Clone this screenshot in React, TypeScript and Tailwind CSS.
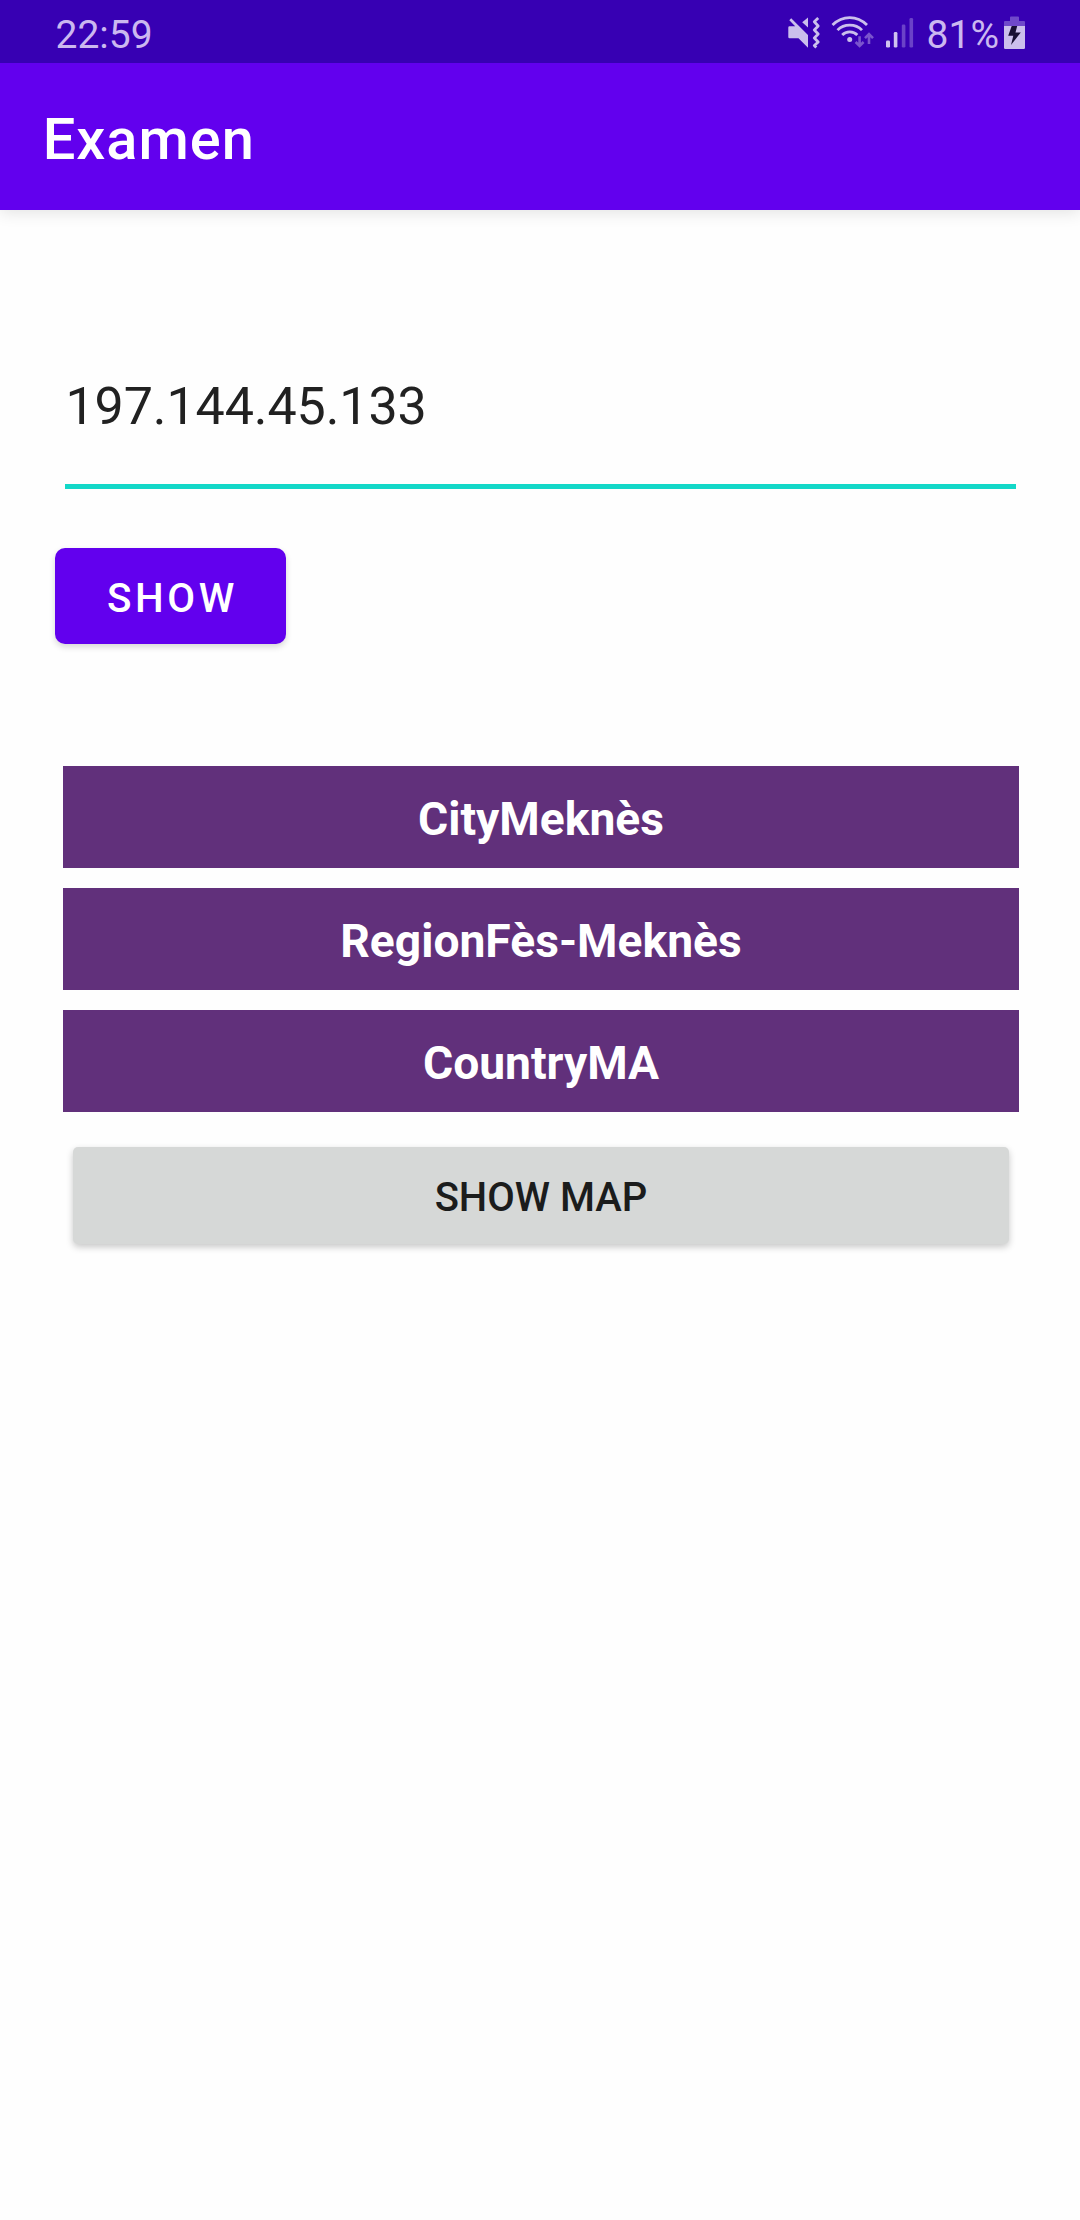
const results = ["CityMeknès", "RegionFès-Meknès", "CountryMA"];

function MutedIcon() {
  return (
    <svg className="h-[34px] w-[33px]" viewBox="0 0 33 34" fill="none">
      <path d="M1.5 10.3H7.2L1.3 4.2L3.2 2.2L20 19V31.7L10.5 22.3H1.5Q.3 22.3 .3 21V11.5Q.3 10.3 1.5 10.3Z" fill="#cbbfec" />
      <path d="M20 1.5V11.5L14.2 6.2Z" fill="#cbbfec" />
      <path d="M30.2 2L26.3 5.7L30.2 10L26.3 14L30.2 18L26.3 22L30.2 26L26.3 29.5L28.3 31.5" stroke="#cbbfec" strokeWidth="2.8" strokeLinejoin="round" />
    </svg>
  );
}

function WifiIcon() {
  return (
    <svg className="h-[34px] w-[44px]" viewBox="0 0 44 34" fill="none">
      <g stroke="#cbbfec" strokeWidth="2.8">
        <path d="M1.5 10C11.5 .1 26 .1 36 10" />
        <path d="M6.5 15.1C13 8.4 24.5 8.4 31 15.1" />
        <path d="M11.2 20C15 15.9 22.5 15.9 26.3 20" />
      </g>
      <circle cx="18.7" cy="24.5" r="2.5" fill="#cbbfec" />
      <g stroke="#7b55cd" strokeWidth="2.6">
        <path d="M28.6 21.2V31.5M24.6 27L28.6 31L32.6 27" />
        <path d="M38 29V19M34 23.2L38 19.2L42 23.2" />
      </g>
    </svg>
  );
}

function SignalIcon() {
  return (
    <svg className="h-[34px] w-[28px]" viewBox="0 0 28 34">
      <rect x="0" y="25.5" width="4" height="7" rx="1.3" fill="#d0c3ef" />
      <rect x="7.8" y="17" width="3.6" height="15.5" rx="1.3" fill="#d0c3ef" />
      <rect x="15.8" y="9.5" width="3.6" height="23" rx="1.3" fill="#6b42c8" />
      <rect x="23.5" y="3" width="3.6" height="29.5" rx="1.3" fill="#6b42c8" />
    </svg>
  );
}

function BatteryIcon() {
  return (
    <svg className="h-[34px] w-[21px]" viewBox="0 0 21 34">
      <path d="M6 5V1.5Q6 .6 7 .6H14Q15 .6 15 1.5V5H20Q21 5 21 6V10H0V6Q0 5 1 5Z" fill="#6f49ca" />
      <path d="M0 10H21V31.8Q21 33 19.8 33H1.2Q0 33 0 31.8Z" fill="#cbbfec" />
      <path d="M7.7 10H13.2L11.5 16.5H16.8L7 29L9.3 19.8H4.2Z" fill="#180f33" />
    </svg>
  );
}

export default function App() {
  return (
    <div className="flex h-[2220px] w-[1080px] flex-col bg-[#fefefe] font-['Roboto',sans-serif]">
      <header className="z-10 shadow-[0_2px_16px_rgba(0,0,0,0.12)]">
        <div className="flex h-[63px] justify-between bg-[#3700b3] pt-[6px] pr-[55px] pl-[55.5px] text-[39px] leading-[58px] text-[#cbb8f0]">
          <span>22:59</span>
          <div className="flex">
            <div className="mr-[10px] pt-[10px]"><MutedIcon /></div>
            <div className="mr-[11px] pt-[9px]"><WifiIcon /></div>
            <div className="mr-[13px] pt-[9px]"><SignalIcon /></div>
            <span className="mr-[5px]">81%</span>
            <div className="pt-[10px]"><BatteryIcon /></div>
          </div>
        </div>
        <h1 className="h-[147px] bg-[#6200ee] pt-[5px] pl-[42.7px] text-[57.75px] leading-[142px] font-medium tracking-[1px] text-white">Examen</h1>
      </header>
      <main className="flex flex-col pr-[61px] pl-[63px]">
        <input
          aria-label="IP address"
          className="mx-[2px] mt-[137px] h-[142px] w-[951px] border-b-[5px] border-[#13d8c8] pb-[18px] pl-[0.5px] text-[52px] tracking-[-0.1px] text-[#212121] outline-none"
          defaultValue="197.144.45.133"
        />
        <button className="mt-[59px] -ml-[8px] h-[96px] w-[231px] rounded-[10px] bg-[#6200ee] pt-[6px] pl-[4px] text-[40.4px] font-medium tracking-[3.6px] text-white shadow-[0_3px_6px_rgba(0,0,0,0.16)]">
          SHOW
        </button>
        <div className="mt-[122px] flex flex-col gap-[20px]">
          {results.map((text) => (
            <div key={text} className="h-[102px] bg-[#61307b] pt-[4px] text-center text-[46.2px] leading-[98px] font-bold text-white">
              {text}
            </div>
          ))}
        </div>
        <button className="mx-[10px] mt-[35px] h-[97px] rounded-[5px] bg-[#d6d8d7] pt-[5px] text-[40px] font-medium text-[#1b1c1c] shadow-[0_3px_7px_rgba(0,0,0,0.22)]">
          SHOW MAP
        </button>
      </main>
    </div>
  );
}
